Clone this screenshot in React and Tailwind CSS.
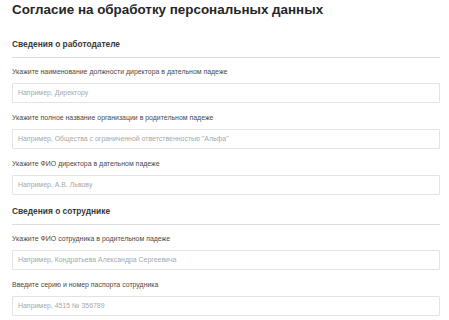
import React from "react";

const font = { fontFamily: '"Liberation Sans", Arial, sans-serif' };

function Field({ label, placeholder, first }) {
  return (
    <div className={first ? "mt-[8px]" : "mt-[9px]"}>
      <div className="text-[6.95px] leading-[12px] text-[#4a4a4a] whitespace-nowrap">{label}</div>
      <div className="mt-[5px] h-[20px] border border-[#e3e3e3] rounded-[1px] flex items-center pl-[5px] bg-white">
        <span className="text-[6.95px] text-[#a8a8a8] whitespace-nowrap">{placeholder}</span>
      </div>
    </div>
  );
}

function Section({ title, className, children }) {
  return (
    <div className={className}>
      <div className="text-[8.4px] leading-[12px] font-bold text-[#383838] pb-[7px] border-b border-[#dedede] whitespace-nowrap">
        {title}
      </div>
      {children}
    </div>
  );
}

export default function App() {
  return (
    <div className="w-[449px] h-[320px] bg-white overflow-hidden pl-[11px] pr-[9px]" style={font}>
      <div className="text-[13.4px] leading-[20px] font-bold text-[#262626] pl-[1px] whitespace-nowrap">
        Согласие на обработку персональных данных
      </div>
      <Section title="Сведения о работодателе" className="mt-[18px] pl-[1px]">
        <Field first label="Укажите наименование должности директора в дательном падеже" placeholder="Например, Директору" />
        <Field label="Укажите полное название организации в родительном падеже" placeholder={'Например, Общества с ограниченной ответственностью "Альфа"'} />
        <Field label="Укажите ФИО директора в дательном падеже" placeholder="Например, А.В. Львову" />
      </Section>
      <Section title="Сведения о сотруднике" className="mt-[10px] pl-[1px]">
        <Field first label="Укажите ФИО сотрудника в родительном падеже" placeholder="Например, Кондратьева Александра Сергеевича" />
        <Field label="Введите серию и номер паспорта сотрудника" placeholder="Например, 4515 № 356789" />
      </Section>
    </div>
  );
}
